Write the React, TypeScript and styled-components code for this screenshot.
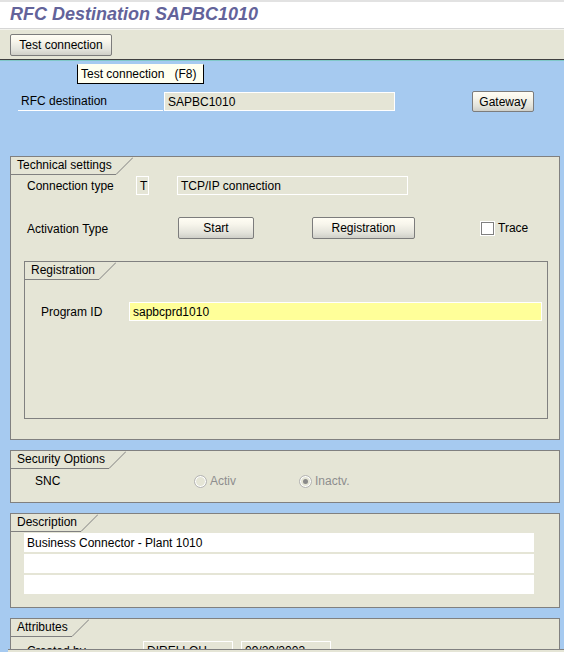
import React, { FC, ReactNode } from "react"
import styled, { createGlobalStyle } from "styled-components"

const GlobalStyle = createGlobalStyle`
  html, body {
    margin: 0;
    padding: 0;
    background: #a6caf0;
  }
  body {
    font-family: "Liberation Sans", Arial, sans-serif;
    font-size: 12px;
    color: #000;
  }
`

// ---------- shared pieces ----------

const GroupBox = styled.div<{ $height: number; $width?: number; $mt?: number; $ml?: number }>`
  box-sizing: border-box;
  width: ${(p) => (p.$width ? `${p.$width}px` : "550px")};
  height: ${(p) => p.$height}px;
  margin-top: ${(p) => p.$mt ?? 0}px;
  margin-left: ${(p) => p.$ml ?? 0}px;
  border: 1px solid #808080;
  background: #e5e5d6;
  display: flex;
  flex-direction: column;
  overflow: hidden;
`

const TabHead = styled.div`
  display: flex;
  height: 18px;
  flex-shrink: 0;
`

const TabLabel = styled.div`
  box-sizing: border-box;
  height: 18px;
  line-height: 17px;
  padding: 0 4px 0 6px;
  border-bottom: 1px solid #808080;
  white-space: nowrap;
`

const Slant = styled.svg`
  display: block;
  width: 17px;
  height: 18px;
`

const Group: FC<{
  title: string
  height: number
  width?: number
  mt?: number
  ml?: number
  children?: ReactNode
}> = ({ title, height, width, mt, ml, children }) => (
  <GroupBox $height={height} $width={width} $mt={mt} $ml={ml}>
    <TabHead>
      <TabLabel>{title}</TabLabel>
      <Slant viewBox="0 0 17 18">
        <line x1="0" y1="17.5" x2="17" y2="0.5" stroke="#808080" strokeWidth="1" />
      </Slant>
    </TabHead>
    {children}
  </GroupBox>
)

const Row = styled.div<{ $mt?: number; $pl?: number; $h?: number }>`
  display: flex;
  align-items: center;
  height: ${(p) => p.$h ?? 19}px;
  margin-top: ${(p) => p.$mt ?? 0}px;
  padding-left: ${(p) => p.$pl ?? 0}px;
  flex-shrink: 0;
`

const Label = styled.div<{ $w: number }>`
  box-sizing: border-box;
  width: ${(p) => p.$w}px;
  height: 19px;
  padding-top: 1px;
  line-height: 18px;
  flex-shrink: 0;
  white-space: nowrap;
`

const Field = styled.div<{ $w: number; $bg?: string; $ml?: number }>`
  box-sizing: border-box;
  width: ${(p) => p.$w}px;
  height: 19px;
  margin-left: ${(p) => p.$ml ?? 0}px;
  border: 1px solid #fff;
  background: ${(p) => p.$bg ?? "transparent"};
  padding: 1px 0 0 3px;
  line-height: 16px;
  white-space: nowrap;
  overflow: hidden;
  flex-shrink: 0;
`

const Button = styled.button<{ $w: number; $h?: number; $ml?: number }>`
  box-sizing: border-box;
  width: ${(p) => p.$w}px;
  height: ${(p) => p.$h ?? 22}px;
  margin: 0 0 0 ${(p) => p.$ml ?? 0}px;
  padding: 0;
  border: 1px solid #7c7c7c;
  border-radius: 2px;
  background: linear-gradient(
    #fffdf4 0%,
    #f8f6ec 30%,
    #ecebe2 55%,
    #e2e2da 75%,
    #cfcfc8 100%
  );
  font-family: "Liberation Sans", Arial, sans-serif;
  font-size: 12px;
  color: #000;
  flex-shrink: 0;
  cursor: default;
`

// ---------- header ----------

const TitleBar = styled.div`
  height: 26px;
  border-top: 2px solid #e2e2e2;
  border-bottom: 1px solid #d6d6d6;
  background: #fff;
  padding-left: 10px;
  line-height: 25px;
  font-size: 18px;
  font-weight: bold;
  font-style: italic;
  color: #63639a;
  white-space: nowrap;
`

const Toolbar = styled.div`
  box-sizing: border-box;
  height: 31px;
  border-top: 1px solid #f4f4ee;
  border-bottom: 1px solid #404040;
  background: #e5e5d6;
  padding: 4px 0 0 10px;
`

// ---------- content ----------

const Shell = styled.div`
  height: 652px;
  overflow: hidden;
  display: flex;
  flex-direction: column;
`

const Content = styled.div`
  position: relative;
  flex: 1;
  overflow: hidden;
  border-top: 1px solid #80c8c8;
  background: #a6caf0;
  padding: 30px 4px 0 10px;
`

const Tooltip = styled.div`
  position: absolute;
  top: 3px;
  left: 77px;
  box-sizing: border-box;
  width: 127px;
  height: 20px;
  border: 1px solid #000;
  border-top-color: #fffff0;
  background: #fffff0;
  padding: 1px 0 0 3px;
  line-height: 17px;
  white-space: pre;
  z-index: 2;
`

const DestLabel = styled.div`
  box-sizing: border-box;
  width: 145px;
  height: 19px;
  border-bottom: 1px solid #fff;
  padding: 1px 0 0 3px;
  line-height: 17px;
  flex-shrink: 0;
`

const CheckBox = styled.span`
  box-sizing: border-box;
  display: inline-block;
  width: 13px;
  height: 13px;
  border: 1px solid #808080;
  outline: 1px solid #fff;
  background: #fff;
  margin-left: 66px;
  margin-right: 4px;
`

const Radio = styled.span<{ $checked?: boolean }>`
  box-sizing: border-box;
  position: relative;
  display: inline-block;
  width: 13px;
  height: 13px;
  border-radius: 50%;
  border: 1px solid #b4b4b4;
  box-shadow: inset 0 0 0 1px #fff;
  background: #e5e5d6;
  margin-right: 3px;
  flex-shrink: 0;

  &::after {
    content: "";
    display: ${(p) => (p.$checked ? "block" : "none")};
    position: absolute;
    left: 3px;
    top: 3px;
    width: 5px;
    height: 5px;
    border-radius: 50%;
    background: #8a8a8a;
  }
`

const RadioItem = styled.div<{ $w: number }>`
  display: flex;
  align-items: center;
  width: ${(p) => p.$w}px;
  padding-top: 1px;
  color: #8e8e8e;
`

const DescLine = styled.div<{ $mt?: number }>`
  box-sizing: border-box;
  width: 510px;
  height: 19px;
  margin: ${(p) => p.$mt ?? 0}px 0 0 13px;
  background: #fff;
  padding: 1px 0 0 3px;
  line-height: 18px;
  flex-shrink: 0;
`

const StatusEdge = styled.div`
  height: 2px;
  margin-left: 8px;
  border-top: 1px solid #808080;
  background: #e5e5d6;
  flex-shrink: 0;
`

const App: FC = () => {
  return (
    <>
      <GlobalStyle />
      <Shell>
        <TitleBar>RFC Destination SAPBC1010</TitleBar>
        <Toolbar>
          <Button $w={102}>Test connection</Button>
        </Toolbar>

        <Content>
          <Tooltip>{"Test connection   (F8)"}</Tooltip>

          <Row $h={21} $pl={8}>
            <DestLabel>RFC destination</DestLabel>
            <Field $w={231} $ml={1} $bg="#e5e5d6">
              SAPBC1010
            </Field>
            <Button $w={62} $h={21} $ml={77}>
              Gateway
            </Button>
          </Row>

          <Group title="Technical settings" height={284} mt={44}>
            <Row $mt={1} $pl={16}>
              <Label $w={109}>Connection type</Label>
              <Field $w={13}>T</Field>
              <Field $w={231} $ml={28}>
                TCP/IP connection
              </Field>
            </Row>
            <Row $mt={22} $pl={16} $h={22}>
              <Label $w={151}>Activation Type</Label>
              <Button $w={76}>Start</Button>
              <Button $w={103} $ml={58}>
                Registration
              </Button>
              <CheckBox />
              <span>Trace</span>
            </Row>

            <Group title="Registration" height={158} width={524} mt={22} ml={13}>
              <Row $mt={22} $pl={16}>
                <Label $w={88}>Program ID</Label>
                <Field $w={413} $bg="#ffff99">
                  sapbcprd1010
                </Field>
              </Row>
            </Group>
          </Group>

          <Group title="Security Options" height={53} mt={10}>
            <Row $mt={2} $pl={24}>
              <Label $w={159}>SNC</Label>
              <RadioItem $w={105}>
                <Radio />
                Activ
              </RadioItem>
              <RadioItem $w={80}>
                <Radio $checked />
                Inactv.
              </RadioItem>
            </Row>
          </Group>

          <Group title="Description" height={95} mt={10}>
            <DescLine $mt={1}>Business Connector - Plant 1010</DescLine>
            <DescLine $mt={2} />
            <DescLine $mt={2} />
          </Group>

          <Group title="Attributes" height={60} mt={10}>
            <Row $mt={4} $pl={16}>
              <Label $w={116}>Created by</Label>
              <Field $w={90}>DIRELLOH</Field>
              <Field $w={90} $ml={8}>
                09/20/2003
              </Field>
            </Row>
          </Group>
        </Content>
        <StatusEdge />
      </Shell>
    </>
  )
}

export default App
